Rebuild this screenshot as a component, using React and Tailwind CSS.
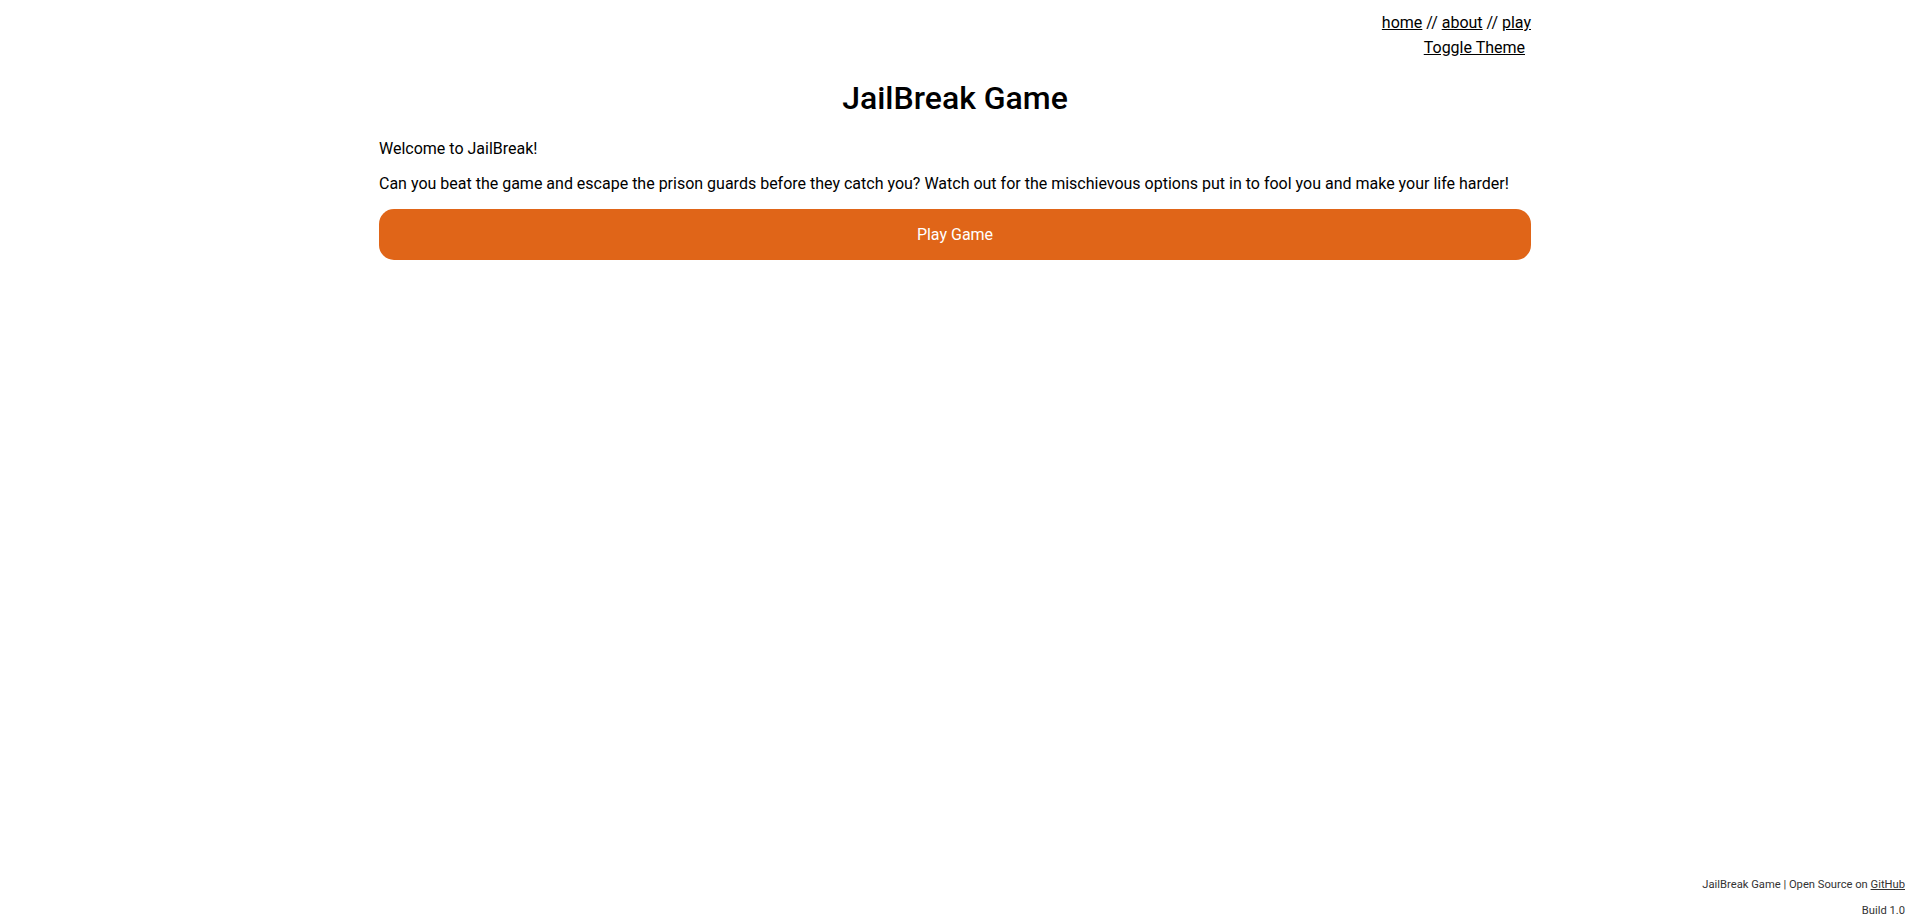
export default function App() {
  return (
    <div className="relative min-h-screen bg-white text-black font-['Roboto',sans-serif]">
      <div className="pr-[5px]">
        <div className="mx-auto w-full max-w-[1152px]">
          <nav className="flex flex-col items-end pt-[13px] text-[16px] leading-[19px]">
            <div>
              <a href="#" className="underline">home</a> //{" "}
              <a href="#" className="underline">about</a> //{" "}
              <a href="#" className="underline">play</a>
            </div>
            <button className="mt-[6px] pr-[6px] underline leading-[19px]">Toggle Theme</button>
          </nav>

          <h1 className="mt-[22px] mb-[22px] text-center text-[32px] leading-[38px] font-medium">
            JailBreak Game
          </h1>

          <p className="text-[16px] leading-[19px]">Welcome to JailBreak!</p>
          <p className="mt-4 text-[16px] leading-[19px]">
            Can you beat the game and escape the prison guards before they catch you? Watch out for the
            mischievous options put in to fool you and make your life harder!
          </p>

          <button className="mt-4 w-full rounded-[15px] bg-[#e06518] py-4 text-[16px] leading-[19px] text-white">
            Play Game
          </button>
        </div>
      </div>

      <footer className="absolute bottom-[7px] right-[10px] text-right text-[11.2px] leading-[13px] text-[#333]">
        <p>
          JailBreak Game | Open Source on <a href="#" className="underline">GitHub</a>
        </p>
        <p className="mt-[13px]">Build 1.0</p>
      </footer>
    </div>
  );
}
